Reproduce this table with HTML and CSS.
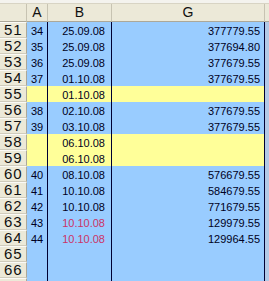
FILE: index.html
```html
<!DOCTYPE html>
<html>
<head>
<meta charset="utf-8">
<link rel="stylesheet" href="styles.css">
</head>
<body>
<div class="sheet">
  <div class="topstrip"></div>
  <div class="grid">
    <div class="hd corner"></div>
    <div class="hd colA">A</div>
    <div class="hd colB">B</div>
    <div class="hd colG">G</div>
    <div class="hd colH"></div>

    <div class="rh">51</div><div class="c a blue">34</div><div class="c b blue">25.09.08</div><div class="c g blue">377779.55</div><div class="c h"></div>
    <div class="rh">52</div><div class="c a blue">35</div><div class="c b blue">25.09.08</div><div class="c g blue">377694.80</div><div class="c h"></div>
    <div class="rh">53</div><div class="c a blue">36</div><div class="c b blue">25.09.08</div><div class="c g blue">377679.55</div><div class="c h"></div>
    <div class="rh">54</div><div class="c a blue">37</div><div class="c b blue">01.10.08</div><div class="c g blue">377679.55</div><div class="c h"></div>
    <div class="rh">55</div><div class="c a yellow"></div><div class="c b yellow">01.10.08</div><div class="c g yellow"></div><div class="c h"></div>
    <div class="rh">56</div><div class="c a blue">38</div><div class="c b blue">02.10.08</div><div class="c g blue">377679.55</div><div class="c h"></div>
    <div class="rh">57</div><div class="c a blue">39</div><div class="c b blue">03.10.08</div><div class="c g blue">377679.55</div><div class="c h"></div>
    <div class="rh">58</div><div class="c a yellow"></div><div class="c b yellow">06.10.08</div><div class="c g yellow"></div><div class="c h"></div>
    <div class="rh">59</div><div class="c a yellow"></div><div class="c b yellow">06.10.08</div><div class="c g yellow"></div><div class="c h"></div>
    <div class="rh">60</div><div class="c a blue">40</div><div class="c b blue">08.10.08</div><div class="c g blue">576679.55</div><div class="c h"></div>
    <div class="rh">61</div><div class="c a blue">41</div><div class="c b blue">10.10.08</div><div class="c g blue">584679.55</div><div class="c h"></div>
    <div class="rh">62</div><div class="c a blue">42</div><div class="c b blue">10.10.08</div><div class="c g blue">771679.55</div><div class="c h"></div>
    <div class="rh">63</div><div class="c a blue">43</div><div class="c b blue red">10.10.08</div><div class="c g blue">129979.55</div><div class="c h"></div>
    <div class="rh">64</div><div class="c a blue">44</div><div class="c b blue red">10.10.08</div><div class="c g blue">129964.55</div><div class="c h"></div>
    <div class="rh">65</div><div class="c a blue"></div><div class="c b blue"></div><div class="c g blue"></div><div class="c h"></div>
    <div class="rh">66</div><div class="c a blue"></div><div class="c b blue"></div><div class="c g blue"></div><div class="c h"></div>
    <div class="rh"></div><div class="c a blue"></div><div class="c b blue"></div><div class="c g blue"></div><div class="c h"></div>
  </div>
</div>
</body>
</html>
```

FILE: styles.css
```css
html, body {
  margin: 0;
  padding: 0;
  background: #ffffff;
  overflow: hidden;
}

.sheet {
  width: 269px;
  height: 281px;
  overflow: hidden;
  font-family: "Liberation Sans", Arial, sans-serif;
  color: #000;
}

.topstrip {
  height: 4px;
  background: #f4f3ee;
  border-bottom: 1px solid #d8d4c4;
  box-sizing: border-box;
}

.grid {
  display: grid;
  grid-template-columns: 27px 21px 64px 153px 4px;
  grid-template-rows: 18px;
  grid-auto-rows: 16px;
}

.hd {
  background: #ece9d8;
  border-right: 1px solid #c7c3b2;
  border-bottom: 1px solid #aca899;
  box-sizing: border-box;
  font-size: 14px;
  line-height: 17px;
  text-align: center;
  color: #111;
}

.colH {
  border-right: none;
}

.rh {
  background: #ece9d8;
  border-right: 1px solid #aca899;
  border-bottom: 1px solid #d0ccbc;
  border-top: 1px solid #fbfaf6;
  box-sizing: border-box;
  font-size: 15px;
  line-height: 14px;
  letter-spacing: 1px;
  padding-left: 4px;
  color: #111;
}

.c {
  box-sizing: border-box;
  font-size: 11px;
  line-height: 16px;
  white-space: nowrap;
  padding-top: 1px;
  color: #000022;
}

.blue {
  background: #99ccff;
}

.yellow {
  background: #ffff99;
}

.a {
  border-right: 1px solid #000033;
  text-align: center;
}

.b {
  border-right: 1px solid #000033;
  text-align: right;
  padding-right: 6px;
}

.g {
  border-right: 1px solid #000033;
  text-align: right;
  padding-right: 4px;
}

.h {
  background: #b3c9e6;
}

.c.red {
  color: #cc3366;
}
```
